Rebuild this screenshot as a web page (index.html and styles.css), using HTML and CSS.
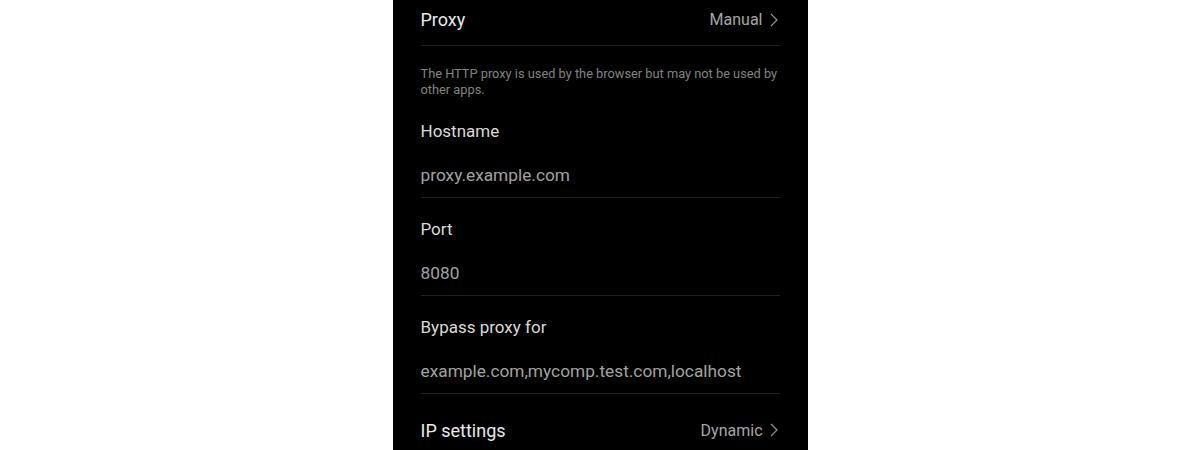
FILE: index.html
```html
<!DOCTYPE html>
<html lang="en">
<head>
<meta charset="utf-8">
<title>Proxy settings</title>
<link rel="stylesheet" href="styles.css">
</head>
<body>
<main class="screen">
  <div class="nav-row first">
    <span class="nav-title">Proxy</span>
    <span class="nav-value">Manual
      <svg class="chevron" viewBox="0 0 8 14" width="8" height="14"><path d="M1 1l6 6-6 6" fill="none" stroke="currentColor" stroke-width="1.3"/></svg>
    </span>
  </div>
  <p class="note">The HTTP proxy is used by the browser but may not be used by other apps.</p>
  <div class="field first-field">
    <div class="field-label">Hostname</div>
    <div class="field-value">proxy.example.com</div>
  </div>
  <div class="field">
    <div class="field-label">Port</div>
    <div class="field-value">8080</div>
  </div>
  <div class="field">
    <div class="field-label">Bypass proxy for</div>
    <div class="field-value">example.com,mycomp.test.com,localhost</div>
  </div>
  <div class="nav-row last">
    <span class="nav-title">IP settings</span>
    <span class="nav-value">Dynamic
      <svg class="chevron" viewBox="0 0 8 14" width="8" height="14"><path d="M1 1l6 6-6 6" fill="none" stroke="currentColor" stroke-width="1.3"/></svg>
    </span>
  </div>
</main>
</body>
</html>
```

FILE: styles.css
```css
html, body {
  margin: 0;
  padding: 0;
  background: #ffffff;
}

body {
  display: flex;
  justify-content: center;
  font-family: Roboto, "Noto Sans", sans-serif;
}

.screen {
  width: 415px;
  height: 450px;
  overflow: hidden;
  background: #000000;
  padding: 0 28px;
  box-sizing: border-box;
}

.nav-row {
  display: flex;
  align-items: center;
  justify-content: space-between;
}

.nav-row.first {
  height: 39px;
  border-bottom: 1px solid #1f1f1f;
  padding-bottom: 6px;
}

.nav-row.last {
  height: 40px;
  margin-top: 16px;
}

.nav-title {
  font-size: 18px;
  color: #e9e9e9;
}

.nav-value {
  display: flex;
  align-items: center;
  gap: 7px;
  font-size: 16px;
  color: #a6a6a6;
}

.chevron {
  color: #8c8c8c;
  margin-right: 2px;
}

.note {
  margin: 0;
  padding-top: 20px;
  font-size: 12.8px;
  line-height: 16px;
  color: #838383;
}

.field {
  padding: 19px 0 10px;
  border-bottom: 1px solid #1f1f1f;
  display: flex;
  flex-direction: column;
  gap: 20px;
}

.field.first-field {
  padding-top: 21px;
}

.field:last-of-type {
  padding-bottom: 9px;
}

.field-label {
  font-size: 17px;
  line-height: 24px;
  color: #d9d9d9;
}

.field-value {
  font-size: 17.3px;
  line-height: 24px;
  color: #a2a2a2;
}
```
